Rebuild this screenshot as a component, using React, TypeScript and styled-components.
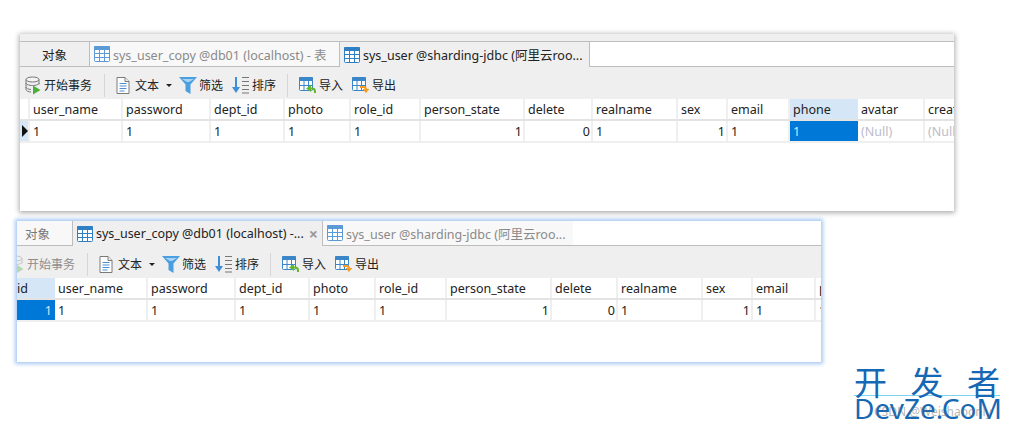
import React from 'react';
import styled, { createGlobalStyle } from 'styled-components';

const GlobalStyle = createGlobalStyle`
  html, body {
    margin: 0;
    padding: 0;
    background: #fff;
  }
  body {
    width: 1010px;
    height: 431px;
    overflow: hidden;
    font-family: 'Noto Sans', 'Noto Sans CJK SC', sans-serif;
  }
`;

const Page = styled.div`
  display: flex;
  flex-direction: column;
  align-items: flex-start;
  padding: 34px 0 0 20px;
`;

const Window = styled.div<{ $width: number; $second?: boolean }>`
  width: ${(p) => p.$width}px;
  height: ${(p) => (p.$second ? 141 : 177)}px;
  margin: ${(p) => (p.$second ? '10px 0 0 -3px' : '0')};
  background: #fff;
  overflow: hidden;
  box-shadow: ${(p) =>
    p.$second
      ? '0 0 4px 2px #a6c8f4'
      : '0 1px 5px 1px rgba(0, 0, 0, 0.32)'};
`;

const TopStrip = styled.div`
  height: 7px;
  background: #efefef;
`;

const TabBar = styled.div<{ $height: number }>`
  display: flex;
  height: ${(p) => p.$height}px;
`;

const Tab = styled.div<{
  $width: number;
  $kind: 'object' | 'active' | 'idle';
  $inset?: number;
  $flat?: boolean;
  $open?: boolean;
}>`
  flex: none;
  box-sizing: border-box;
  display: flex;
  align-items: center;
  gap: 3px;
  width: ${(p) => p.$width}px;
  padding-left: ${(p) => p.$inset ?? 4}px;
  font-size: 12.5px;
  white-space: nowrap;
  color: ${(p) => (p.$kind === 'active' ? '#222' : '#8a8a8a')};
  background: ${(p) => (p.$kind === 'idle' ? '#f8f8f8' : '#efefef')};
  border-top: ${(p) => (p.$flat ? 'none' : '1px solid #bdbdbd')};
  border-right: ${(p) => (p.$open ? 'none' : '1px solid #bdbdbd')};
  border-bottom: ${(p) => (p.$kind === 'active' ? 'none' : '1px solid #bdbdbd')};
`;

const ObjectLabel = styled.span<{ $dark?: boolean }>`
  color: ${(p) => (p.$dark ? '#222' : '#777')};
`;

const TabClose = styled.span`
  margin-left: 2px;
  color: #9a9a9a;
  font-size: 16px;
  line-height: 16px;
  font-weight: 700;
`;

const TabFiller = styled.div<{ $lined?: boolean }>`
  flex: 1;
  background: #fff;
  border-top: ${(p) => (p.$lined ? '1px solid #bdbdbd' : 'none')};
  border-bottom: 1px solid #bdbdbd;
`;

const Toolbar = styled.div`
  box-sizing: border-box;
  height: 32px;
  padding-top: 4px;
  overflow: hidden;
  background: #efefef;
`;

const ToolTrack = styled.div<{ $shift: number }>`
  display: flex;
  align-items: center;
  height: 100%;
  margin-left: ${(p) => 5 + p.$shift}px;
`;

const ToolButton = styled.div<{ $gap?: number; $after?: number; $faded?: boolean }>`
  flex: none;
  display: flex;
  align-items: center;
  gap: ${(p) => p.$gap ?? 3}px;
  margin-right: ${(p) => p.$after ?? 9}px;
  font-size: 12px;
  color: ${(p) => (p.$faded ? '#8d8d8d' : '#222')};
`;

const ToolDivider = styled.div`
  flex: none;
  width: 1px;
  height: 23px;
  margin-right: 11px;
  background: #d6d6d6;
`;

const Caret = styled.span`
  margin-left: 2px;
  width: 0;
  height: 0;
  border-left: 3px solid transparent;
  border-right: 3px solid transparent;
  border-top: 3px solid #222;
`;

const Row = styled.div<{ $header?: boolean }>`
  display: flex;
  box-sizing: border-box;
  height: 22px;
  border-bottom: ${(p) => (p.$header ? '2px solid #e3e3e3' : '2px solid #efefef')};
  white-space: nowrap;
`;

const Cell = styled.div<{
  $width: number;
  $right?: boolean;
  $state?: 'selected' | 'lit';
  $nil?: boolean;
  $flush?: boolean;
}>`
  flex: none;
  box-sizing: border-box;
  width: ${(p) => p.$width}px;
  padding: 0 1px 0 ${(p) => (p.$flush ? 0 : 3)}px;
  overflow: hidden;
  font-size: 12.5px;
  line-height: 21px;
  text-align: ${(p) => (p.$right ? 'right' : 'left')};
  color: ${(p) =>
    p.$state === 'selected' ? '#d5e7f7' : p.$nil ? '#bcbccb' : '#222'};
  background: ${(p) =>
    p.$state === 'selected' ? '#0078d7' : p.$state === 'lit' ? '#d5e7f7' : '#fff'};
  border-right: 2px solid ${(p) => (p.$state ? 'transparent' : '#efefef')};
`;

const Marker = styled.div<{ $lit?: boolean }>`
  flex: none;
  box-sizing: border-box;
  width: 10px;
  display: flex;
  align-items: center;
  padding-left: 2px;
  background: ${(p) => (p.$lit ? '#d5e7f7' : '#fff')};
  border-right: 2px solid #efefef;
`;

const MarkerArrow = styled.span`
  width: 0;
  height: 0;
  border-top: 6px solid transparent;
  border-bottom: 6px solid transparent;
  border-left: 6px solid #111;
`;

const LogoRow = styled.div`
  align-self: flex-end;
  margin: 5px 10px 0 0;
  width: 146px;
  color: #1668b5;
`;

const LogoTitle = styled.div`
  display: flex;
  justify-content: space-between;
  font-family: 'Noto Sans CJK SC', sans-serif;
  font-weight: 400;
  font-size: 33px;
  line-height: 28px;
  border-bottom: 1px solid #7fd3f2;
`;

const LogoName = styled.div`
  position: relative;
  font-size: 28px;
  line-height: 25px;
  white-space: nowrap;
`;

const Watermark = styled.span`
  position: absolute;
  left: 20px;
  top: 9px;
  font-size: 12px;
  line-height: 14px;
  color: rgba(110, 110, 110, 0.5);
`;

const TableIcon = ({ faded }: { faded?: boolean }) => {
  const c = faded ? '#5b9ad6' : '#2f7fc4';
  return (
    <svg width="16" height="16" viewBox="0 0 16 16">
      <rect x="0.5" y="0.5" width="15" height="15" rx="1" fill="#fff" stroke={c} />
      <rect x="0" y="0" width="16" height="4" rx="1" fill={c} />
      <path d="M5.5 4v12M10.5 4v12M0 7.5h16M0 11.5h16" stroke={c} fill="none" />
    </svg>
  );
};

const DatabaseIcon = ({ faded }: { faded?: boolean }) => (
  <svg width="16" height="19" viewBox="0 0 16 19" opacity={faded ? 0.35 : 1}>
    <ellipse cx="7.5" cy="3.5" rx="6.5" ry="2.5" fill="#f4f4f4" stroke="#777" />
    <path
      d="M1 3.5v10c0 1.4 2.4 2.5 5 2.5M14 3.5v5M1 7c0 1.4 3 2.5 6.5 2.5S14 8.4 14 7M1 11c0 1.3 2 2.3 5 2.5"
      fill="none"
      stroke="#777"
    />
    <path d="M8 9.5l7.5 4.5L8 18.5z" fill="#4eb03c" />
  </svg>
);

const DocIcon = () => (
  <svg width="14" height="17" viewBox="0 0 14 17">
    <path d="M1 .5h8l4 4v12H1z" fill="#fff" stroke="#7a7a7a" />
    <path d="M9 .5v4h4" fill="#eee" stroke="#7a7a7a" />
    <path d="M3.5 6.5h7M3.5 9h7M3.5 11.5h7M3.5 14h5" stroke="#4a90d4" fill="none" />
  </svg>
);

const FunnelIcon = () => (
  <svg width="18" height="17" viewBox="0 0 18 17">
    <path d="M0 0h18l-6.500 7.500V17l-5-3V7.500z" fill="#4a9fe0" />
    <path d="M3 2h12l-5 3H8z" fill="#a9d3f2" />
  </svg>
);

const SortIcon = () => (
  <svg width="17" height="18" viewBox="0 0 17 18">
    <path d="M4 1v11" stroke="#3f8fd8" strokeWidth="2" fill="none" />
    <path d="M0 11h8l-4 6z" fill="#3f8fd8" />
    <path d="M10 1.500h7M10 5.500h7M10 9.500h7M10 13.500h7M10 17h7" stroke="#777" fill="none" />
  </svg>
);

const TransferIcon = ({ accent, flip }: { accent: string; flip?: boolean }) => (
  <svg width="17" height="16" viewBox="0 0 17 16">
    <rect x="0.500" y="0.500" width="13" height="13" rx="1" fill="#fff" stroke="#3b86c8" />
    <rect x="0" y="0" width="14" height="4" rx="1" fill="#3b86c8" />
    <path d="M5 4v10M9.500 4v10M0 8.500h14" stroke="#3b86c8" fill="none" />
    {flip ? (
      <>
        <path d="M8 10h3.500a2.500 2.500 0 0 1 2.500 2.500V13" stroke={accent} strokeWidth="2" fill="none" />
        <path d="M10.500 12h7L14 16z" fill={accent} />
      </>
    ) : (
      <>
        <path d="M16 16v-1.500a3 3 0 0 0-3-3h-2" stroke={accent} strokeWidth="2" fill="none" />
        <path d="M12 8v7l-5-3.500z" fill={accent} />
      </>
    )}
  </svg>
);

type Column = {
  name: string;
  width: number;
  value: string;
  right?: boolean;
  nil?: boolean;
  flush?: boolean;
};

const FIRST_COLUMNS: Column[] = [
  { name: 'user_name', width: 93, value: '1' },
  { name: 'password', width: 88, value: '1' },
  { name: 'dept_id', width: 74, value: '1' },
  { name: 'photo', width: 66, value: '1' },
  { name: 'role_id', width: 70, value: '1' },
  { name: 'person_state', width: 104, value: '1', right: true },
  { name: 'delete', width: 68, value: '0', right: true },
  { name: 'realname', width: 85, value: '1' },
  { name: 'sex', width: 50, value: '1', right: true },
  { name: 'email', width: 62, value: '1' },
  { name: 'phone', width: 68, value: '1' },
  { name: 'avatar', width: 67, value: '(Null)', nil: true },
  { name: 'create_time', width: 80, value: '(Null)', nil: true },
];

const SECOND_COLUMNS: Column[] = [
  { name: 'id', width: 38, value: '1', right: true, flush: true },
  { name: 'user_name', width: 93, value: '1' },
  { name: 'password', width: 88, value: '1' },
  { name: 'dept_id', width: 74, value: '1' },
  { name: 'photo', width: 66, value: '1' },
  { name: 'role_id', width: 71, value: '1' },
  { name: 'person_state', width: 105, value: '1', right: true },
  { name: 'delete', width: 66, value: '0', right: true },
  { name: 'realname', width: 85, value: '1' },
  { name: 'sex', width: 50, value: '1', right: true },
  { name: 'email', width: 63, value: '1' },
  { name: 'phone', width: 68, value: '1' },
];

const ToolbarItems = ({ faded }: { faded?: boolean }) => (
  <>
    <ToolButton $faded={faded} $after={12}>
      <DatabaseIcon faded={faded} />
      开始事务
    </ToolButton>
    <ToolDivider />
    <ToolButton $gap={5} $after={7}>
      <DocIcon />
      文本
      <Caret />
    </ToolButton>
    <ToolButton $gap={2} $after={9}>
      <FunnelIcon />
      筛选
    </ToolButton>
    <ToolButton $after={11}>
      <SortIcon />
      排序
    </ToolButton>
    <ToolDivider />
    <ToolButton>
      <TransferIcon accent="#63b82e" />
      导入
    </ToolButton>
    <ToolButton>
      <TransferIcon accent="#f79a1e" flip />
      导出
    </ToolButton>
  </>
);

const DataGrid = ({
  columns,
  litColumn,
  marker,
}: {
  columns: Column[];
  litColumn: string;
  marker?: boolean;
}) => (
  <>
    <Row $header>
      {marker && <Marker />}
      {columns.map((c) => (
        <Cell
          key={c.name}
          $width={c.width}
          $flush={c.flush}
          $state={c.name === litColumn ? 'lit' : undefined}
        >
          {c.name}
        </Cell>
      ))}
    </Row>
    <Row>
      {marker && (
        <Marker $lit>
          <MarkerArrow />
        </Marker>
      )}
      {columns.map((c) => (
        <Cell
          key={c.name}
          $width={c.width}
          $right={c.right}
          $nil={c.nil}
          $state={c.name === litColumn ? 'selected' : undefined}
        >
          {c.value}
        </Cell>
      ))}
    </Row>
  </>
);

const App: React.FC = function () {
  return (
    <Page>
      <GlobalStyle />
      <Window $width={934}>
        <TopStrip />
        <TabBar $height={26}>
          <Tab $kind="object" $width={70} $inset={22}>
            <ObjectLabel $dark>对象</ObjectLabel>
          </Tab>
          <Tab $kind="idle" $width={250}>
            <TableIcon faded />
            sys_user_copy @db01 (localhost) - 表
          </Tab>
          <Tab $kind="active" $width={250}>
            <TableIcon />
            sys_user @sharding-jdbc (阿里云roo...
          </Tab>
          <TabFiller $lined />
        </TabBar>
        <Toolbar>
          <ToolTrack $shift={0}>
            <ToolbarItems />
          </ToolTrack>
        </Toolbar>
        <DataGrid columns={FIRST_COLUMNS} litColumn="phone" marker />
      </Window>
      <Window $width={804} $second>
        <TabBar $height={25}>
          <Tab $kind="idle" $width={56} $inset={8} $flat>
            <ObjectLabel>对象</ObjectLabel>
          </Tab>
          <Tab $kind="active" $width={250} $flat>
            <TableIcon />
            sys_user_copy @db01 (localhost) -...
            <TabClose>×</TabClose>
          </Tab>
          <Tab $kind="idle" $width={250} $flat $open>
            <TableIcon faded />
            sys_user @sharding-jdbc (阿里云roo...
          </Tab>
          <TabFiller />
        </TabBar>
        <Toolbar>
          <ToolTrack $shift={-14}>
            <ToolbarItems faded />
          </ToolTrack>
        </Toolbar>
        <DataGrid columns={SECOND_COLUMNS} litColumn="id" />
      </Window>
      <LogoRow>
        <LogoTitle>
          <span>开</span>
          <span>发</span>
          <span>者</span>
        </LogoTitle>
        <LogoName>
          DevZe.CoM
          <Watermark>CSDN @Weishaoonly</Watermark>
        </LogoName>
      </LogoRow>
    </Page>
  );
};

export default App;
